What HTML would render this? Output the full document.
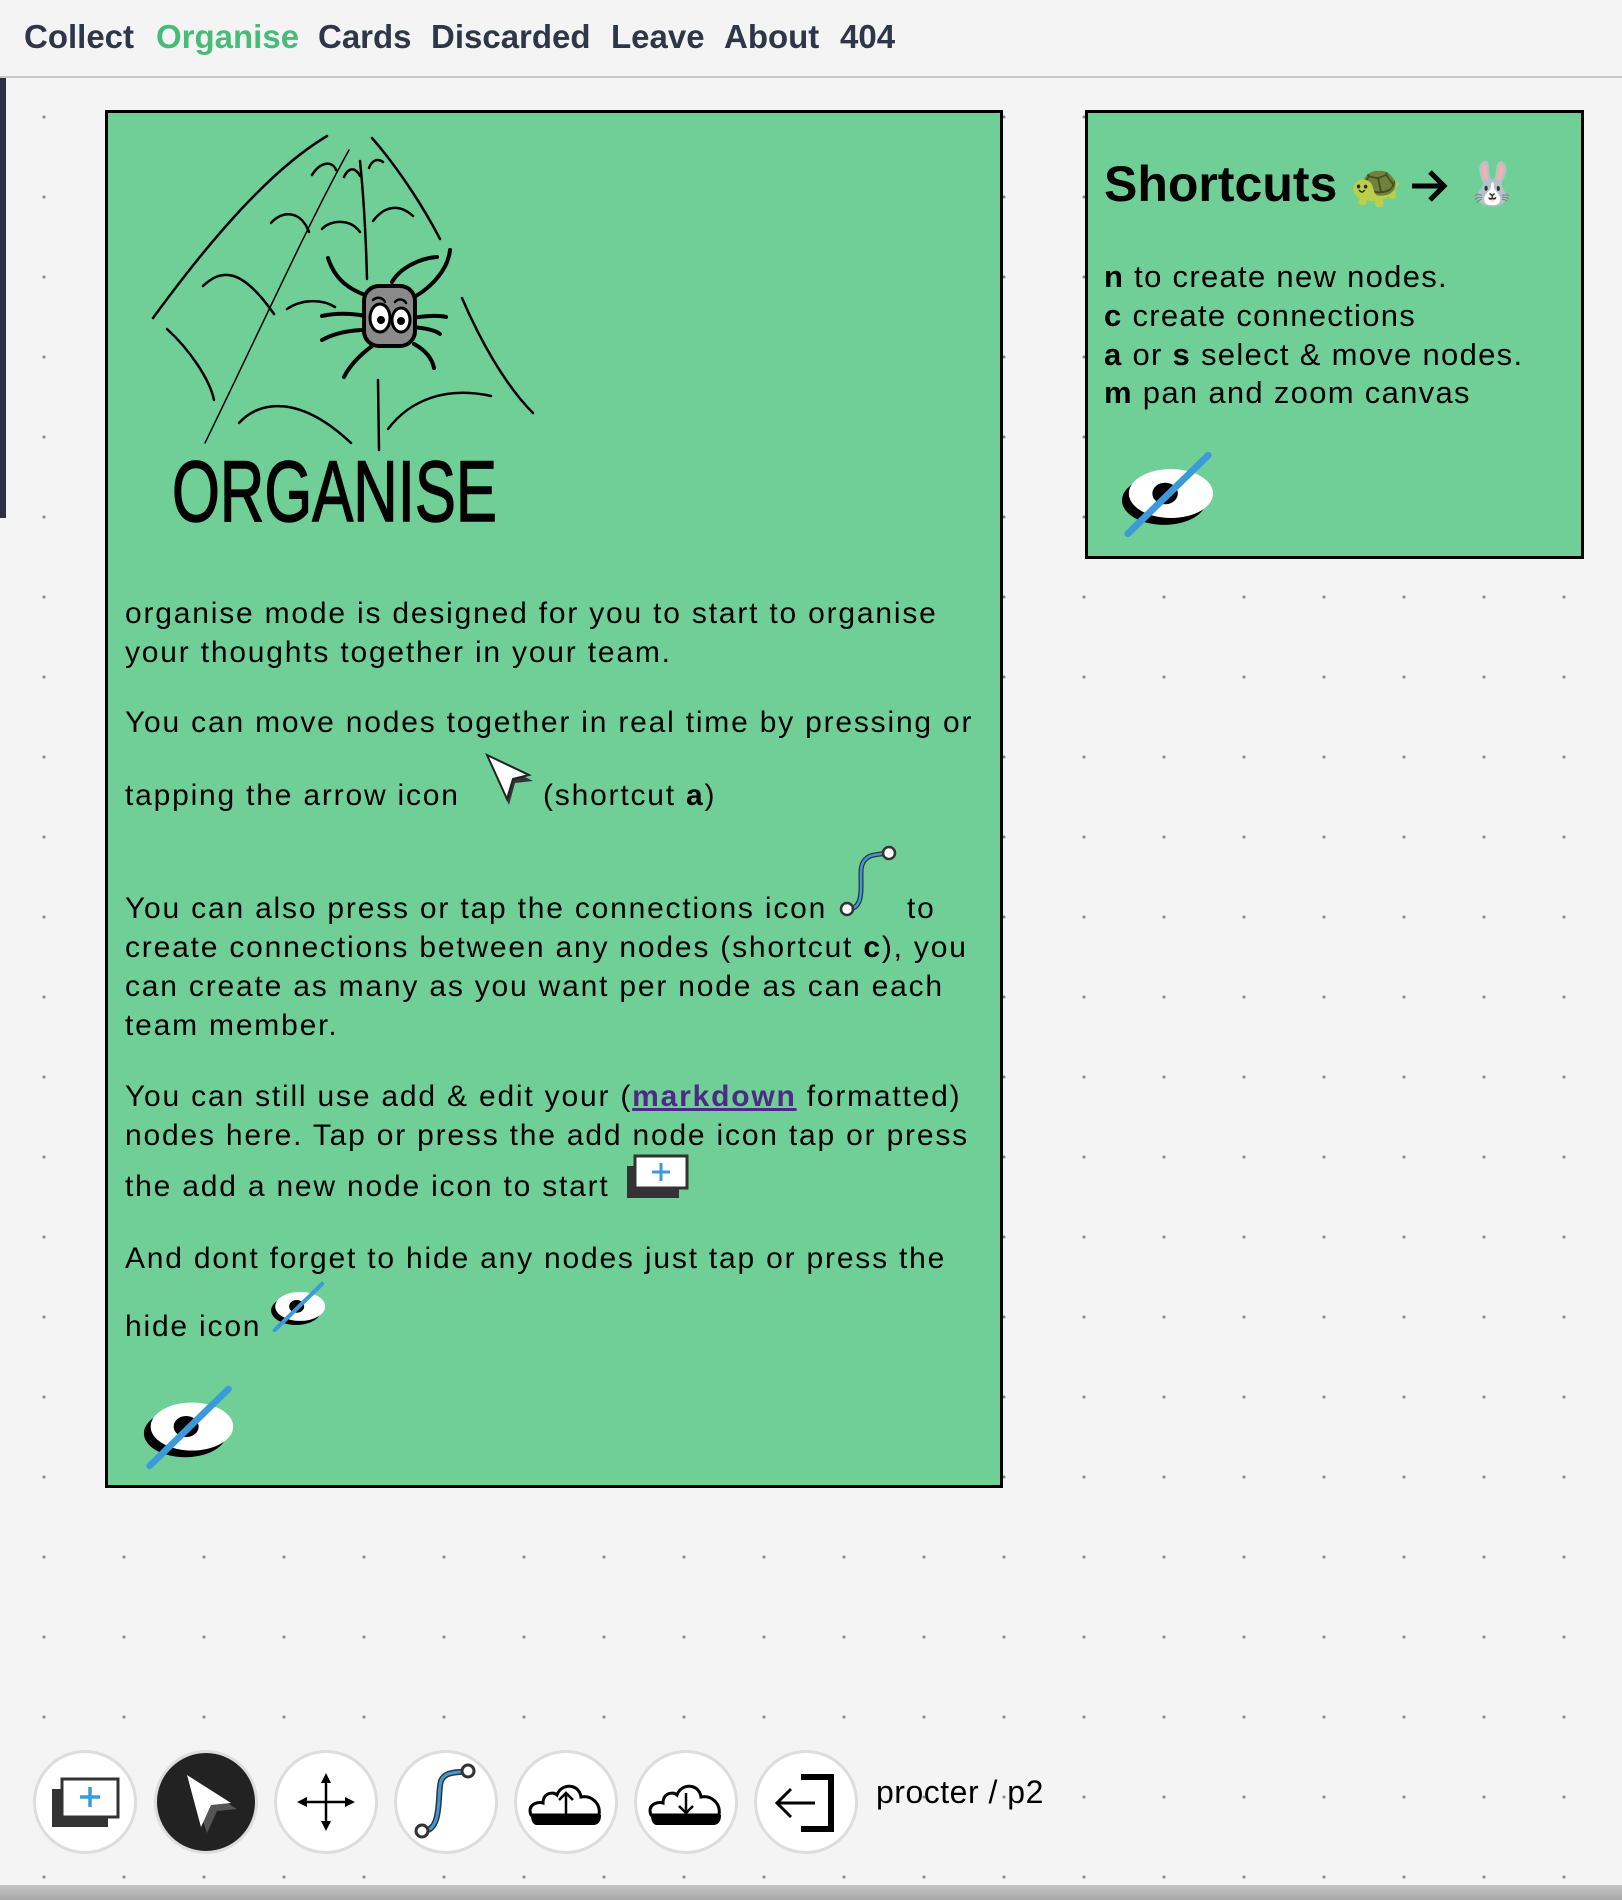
<!DOCTYPE html>
<html><head><meta charset="utf-8"><style>
*{margin:0;padding:0;box-sizing:border-box}
body{width:1622px;height:1900px;overflow:hidden;position:relative;background:#f4f4f4;font-family:"Liberation Sans",sans-serif;color:#000;
background-image:radial-gradient(circle,#8a8a8a 1.3px,transparent 1.8px);background-size:80px 80px;background-position:4px 77px}
.nav{position:absolute;left:0;top:0;width:1622px;height:78px;background:#f4f4f4;border-bottom:2px solid #c8c8c8}
.nav span{position:absolute;top:18px;font-weight:bold;font-size:33px;color:#2d3748}
.card{position:absolute;background:#6fcf97;border:3px solid #000}
.l{position:absolute;font-size:30px;line-height:39px;white-space:nowrap;letter-spacing:1.8px}
.s{position:absolute;font-size:31px;line-height:39px;white-space:nowrap;letter-spacing:1.3px}
.ab{position:absolute}
.btn{position:absolute;top:1750px;width:104px;height:104px;border-radius:50%;background:#fff;border:3px solid #ddd}
</style></head><body>
<div class="ab" style="left:0;top:78px;width:6px;height:440px;background:#2a2f45"></div>
<div class="nav">
<span style="left:24px">Collect</span>
<span style="left:156px;color:#48bb78">Organise</span>
<span style="left:318px">Cards</span>
<span style="left:431px">Discarded</span>
<span style="left:611px">Leave</span>
<span style="left:724px">About</span>
<span style="left:840px">404</span>
</div>

<div class="card" style="left:105px;top:110px;width:898px;height:1378px"></div>
<svg class="ab" style="left:0;top:0" width="600" height="560" viewBox="0 0 600 560" fill="none" stroke="#000" stroke-linecap="round">
<g stroke-width="2.5">
<path d="M153 318 C210 240 270 170 327 136"/>
<path d="M205 443 C260 330 310 220 349 150" stroke-width="1.5"/>
<path d="M360 161 C364 200 366 240 367 279"/>
<path d="M372 138 C400 170 425 210 440 239"/>
<path d="M462 298 C480 340 505 385 533 413"/>
<path d="M167 329 C190 350 210 380 214 400"/>
<path d="M203 286 C220 270 240 265 274 314"/>
<path d="M239 423 C260 400 300 395 351 443"/>
<path d="M378 380 L379 450"/>
<path d="M388 429 C410 400 446 386 491 396"/>
<path d="M271 223 C280 212 300 208 309 232"/>
<path d="M312 175 C320 162 332 160 336 170"/>
<path d="M344 177 C348 168 355 166 360 176"/>
<path d="M369 168 C372 160 378 158 383 162"/>
<path d="M322 229 C330 220 350 218 360 232"/>
<path d="M373 221 C385 205 400 204 413 216"/>
<path d="M287 309 C300 300 320 298 335 307"/>
</g>
<g stroke-width="4">
<path d="M368 296 C350 290 335 280 328 258"/>
<path d="M408 300 C430 290 448 270 450 250"/>
<path d="M392 282 C400 268 420 258 437 257"/>
<path d="M366 316 C350 313 335 313 322 316"/>
<path d="M366 330 C350 330 335 333 322 340"/>
<path d="M412 318 C425 316 438 315 446 317"/>
<path d="M412 327 C425 328 435 330 440 334"/>
<path d="M372 346 C360 355 350 365 344 377"/>
<path d="M414 344 C425 350 432 358 434 368"/>
</g>
<rect x="364" y="286" width="51" height="60" rx="15" fill="#8a8a8a" stroke="#000" stroke-width="4"/>
<ellipse cx="380" cy="318" rx="10" ry="14" fill="#fff" stroke="#000" stroke-width="3"/>
<ellipse cx="401" cy="320" rx="9" ry="12" fill="#fff" stroke="#000" stroke-width="3"/>
<circle cx="381" cy="320" r="3.5" fill="#000"/><circle cx="401" cy="321" r="3.5" fill="#000"/>
<path d="M373 300 C378 296 383 298 385 302 M395 302 C398 298 404 299 406 303" stroke-width="2.5"/>
<text x="172" y="521" font-family="Liberation Sans Narrow, Liberation Sans, sans-serif" font-size="86" fill="#000" stroke="#000" stroke-width="1.5" textLength="325" lengthAdjust="spacingAndGlyphs">ORGANISE</text>
</svg>

<div class="l" style="left:125px;top:594px">organise mode is designed for you to start to organise</div>
<div class="l" style="left:125px;top:633px">your thoughts together in your team.</div>
<div class="l" style="left:125px;top:703px">You can move nodes together in real time by pressing or</div>
<div class="l" style="left:125px;top:776px">tapping the arrow icon</div>
<svg class="ab" style="left:485px;top:753px" width="50" height="54" viewBox="0 0 50 54"><path d="M4 6 L48 28 L30 30 L24 52 Z" fill="#333"/><path d="M2 2 L44 22 L28 26 L22 46 Z" fill="#fff" stroke="#222" stroke-width="2"/></svg>
<div class="l" style="left:543px;top:776px">(shortcut <b>a</b>)</div>
<div class="l" style="left:125px;top:889px">You can also press or tap the connections icon</div>
<svg class="ab" style="left:838px;top:845px" width="62" height="74" viewBox="0 0 62 74"><path d="M10 64 C30 64 20 30 24 20 C28 8 40 10 50 8" stroke="#333" stroke-width="5" fill="none"/><path d="M10 64 C30 64 20 30 24 20 C28 8 40 10 50 8" stroke="#3b9ad9" stroke-width="2.5" fill="none"/><circle cx="9" cy="64" r="6" fill="#fff" stroke="#333" stroke-width="2.5"/><circle cx="51" cy="8" r="6" fill="#fff" stroke="#333" stroke-width="2.5"/></svg>
<div class="l" style="left:907px;top:889px">to</div>
<div class="l" style="left:125px;top:928px">create connections between any nodes (shortcut <b>c</b>), you</div>
<div class="l" style="left:125px;top:967px">can create as many as you want per node as can each</div>
<div class="l" style="left:125px;top:1006px">team member.</div>
<div class="l" style="left:125px;top:1077px">You can still use add &amp; edit your (<b style="color:#4c2a85;text-decoration:underline">markdown</b> formatted)</div>
<div class="l" style="left:125px;top:1116px">nodes here. Tap or press the add node icon tap or press</div>
<div class="l" style="left:125px;top:1167px">the add a new node icon to start</div>
<svg class="ab" style="left:625px;top:1154px" width="64" height="46" viewBox="0 0 64 46"><rect x="2" y="12" width="52" height="32" fill="#333"/><rect x="10" y="2" width="52" height="32" fill="#fff" stroke="#333" stroke-width="3"/><path d="M36 9 V27 M27 18 H45" stroke="#3b9ad9" stroke-width="3"/></svg>
<div class="l" style="left:125px;top:1239px">And dont forget to hide any nodes just tap or press the</div>
<div class="l" style="left:125px;top:1307px">hide icon</div>

<svg width="0" height="0" style="position:absolute"><defs><g id="eye"><ellipse cx="45" cy="54" rx="43" ry="25" fill="#000"/><ellipse cx="52" cy="47" rx="43" ry="25" fill="#fff"/><ellipse cx="46" cy="47" rx="13" ry="11" fill="#000"/><path d="M8 88 L90 8" stroke="#3b9ad9" stroke-width="7" stroke-linecap="round"/></g></defs></svg>
<svg class="ab" style="left:270px;top:1278px" width="58" height="58" viewBox="0 0 100 96"><use href="#eye"/></svg>
<svg class="ab" style="left:142px;top:1381px" width="96" height="93" viewBox="0 0 100 96"><use href="#eye"/></svg>

<div class="card" style="left:1085px;top:110px;width:499px;height:449px"></div>
<div class="ab" style="left:1104px;top:155px;font-size:50px;font-weight:bold;white-space:nowrap">Shortcuts</div>
<div class="ab" style="left:1350px;top:162px;font-size:42px;white-space:nowrap">🐢</div>
<svg class="ab" style="left:1410px;top:168px" width="40" height="36" viewBox="0 0 40 36" fill="none" stroke="#000" stroke-width="5"><path d="M2 18 H34 M20 4 L34 18 L20 32"/></svg>
<div class="ab" style="left:1466px;top:160px;font-size:42px;white-space:nowrap">🐰</div>
<div class="s" style="left:1104px;top:257px"><b>n</b> to create new nodes.</div>
<div class="s" style="left:1104px;top:296px"><b>c</b> create connections</div>
<div class="s" style="left:1104px;top:335px"><b>a</b> or <b>s</b> select &amp; move nodes.</div>
<div class="s" style="left:1104px;top:373px"><b>m</b> pan and zoom canvas</div>
<svg class="ab" style="left:1120px;top:447px" width="98" height="95" viewBox="0 0 100 96"><use href="#eye"/></svg>

<div class="btn" style="left:33px"><svg width="98" height="98" viewBox="0 0 98 98"><rect x="16" y="36" width="56" height="38" fill="#333"/><rect x="26" y="26" width="56" height="38" fill="#fff" stroke="#333" stroke-width="3"/><path d="M54 34 V54 M44 44 H64" stroke="#3b9ad9" stroke-width="3.5"/></svg></div>
<div class="btn" style="left:154px;background:#222"><svg width="98" height="98" viewBox="0 0 98 98"><path d="M32 26 L80 56 L60 58 L50 80 Z" fill="#555"/><path d="M30 22 L74 50 L54 52 L44 74 Z" fill="#fff"/></svg></div>
<div class="btn" style="left:274px"><svg width="98" height="98" viewBox="0 0 98 98" stroke="#000" stroke-width="2.5" fill="#000"><path d="M49 24 V74 M24 49 H74"/><path d="M49 20 L44 30 H54Z M49 78 L44 68 H54Z M20 49 L30 44 V54Z M78 49 L68 44 V54Z" stroke="none"/></svg></div>
<div class="btn" style="left:394px"><svg width="98" height="98" viewBox="0 0 98 98"><path d="M26 78 C46 78 40 40 44 28 C48 18 60 20 70 18" stroke="#333" stroke-width="6" fill="none"/><path d="M26 78 C46 78 40 40 44 28 C48 18 60 20 70 18" stroke="#3b9ad9" stroke-width="3" fill="none"/><circle cx="25" cy="78" r="6" fill="#fff" stroke="#333" stroke-width="3"/><circle cx="71" cy="18" r="6" fill="#fff" stroke="#333" stroke-width="3"/></svg></div>
<div class="btn" style="left:514px"><svg width="98" height="98" viewBox="0 0 98 98"><path d="M14 62 C10 52 20 48 26 50 C26 40 36 38 40 42 C44 30 62 30 64 44 C74 42 84 50 82 62 Z" fill="#fff" stroke="#000" stroke-width="3"/><path d="M14 62 H84 C84 70 80 72 76 72 H20 C16 72 14 68 14 62Z" fill="#000"/><path d="M49 62 V40 M42 47 L49 40 L56 47" stroke="#000" stroke-width="2.5" fill="none"/></svg></div>
<div class="btn" style="left:634px"><svg width="98" height="98" viewBox="0 0 98 98"><path d="M14 62 C10 52 20 48 26 50 C26 40 36 38 40 42 C44 30 62 30 64 44 C74 42 84 50 82 62 Z" fill="#fff" stroke="#000" stroke-width="3"/><path d="M14 62 H84 C84 70 80 72 76 72 H20 C16 72 14 68 14 62Z" fill="#000"/><path d="M49 40 V60 M42 53 L49 60 L56 53" stroke="#000" stroke-width="2.5" fill="none"/></svg></div>
<div class="btn" style="left:754px"><svg width="98" height="98" viewBox="0 0 98 98" fill="none" stroke="#000"><path d="M44 24 H74 V76 H44" stroke-width="6"/><path d="M22 50 H58 M34 36 L20 50 L34 64" stroke-width="3"/></svg></div>
<div class="ab" style="left:876px;top:1774px;font-size:32px;white-space:nowrap;letter-spacing:.5px">procter / p2</div>
<div class="ab" style="left:0;top:1885px;width:1622px;height:15px;background:linear-gradient(#c4c4c4,#a8a8a8)"></div>
</body></html>
